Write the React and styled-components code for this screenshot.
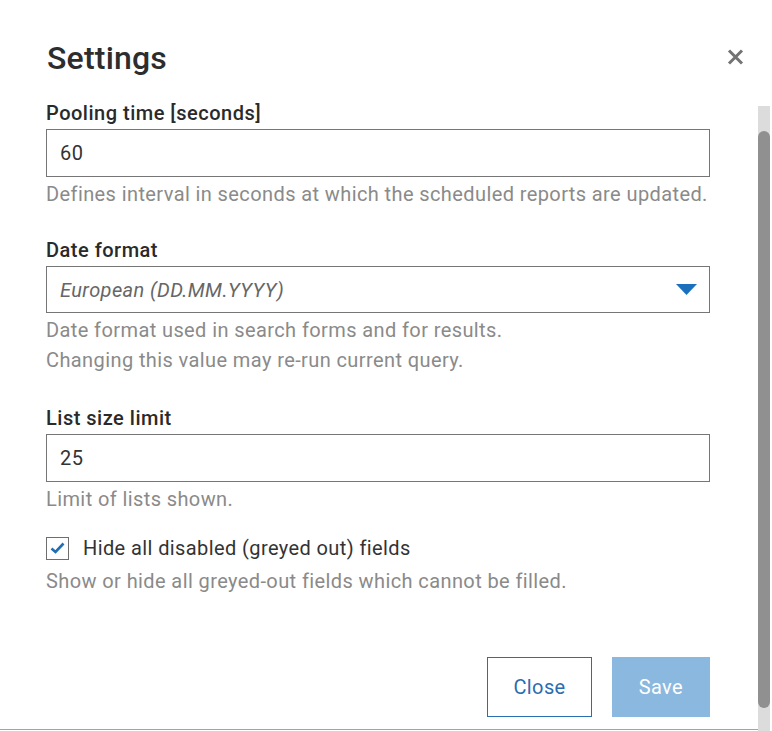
import React, { useState } from 'react';
import styled, { createGlobalStyle } from 'styled-components';

const GlobalStyle = createGlobalStyle`
  html, body {
    margin: 0;
    padding: 0;
    background: #ffffff;
  }
  body {
    font-family: Roboto, "Liberation Sans", Arial, sans-serif;
    -webkit-font-smoothing: antialiased;
  }
  * {
    box-sizing: border-box;
  }
`;

const Page = styled.div`
  width: 772px;
  height: 731px;
  display: flex;
  flex-direction: column;
  overflow: hidden;
`;

const Header = styled.div`
  display: flex;
  align-items: flex-start;
  justify-content: space-between;
  padding: 39px 28px 0 47px;
  height: 77px;
  flex-shrink: 0;
`;

const Title = styled.h1`
  margin: 0;
  font-size: 32px;
  line-height: 38px;
  font-weight: 500;
  letter-spacing: 0.2px;
  color: #2d2d2d;
`;

const CloseIcon = styled.button`
  border: none;
  background: none;
  padding: 0;
  margin-top: 10px;
  width: 17px;
  height: 16px;
  cursor: pointer;
  display: flex;
`;

const Main = styled.div`
  flex: 1;
  display: flex;
  min-height: 0;
`;

const Panel = styled.div`
  flex: 1;
  padding: 24px 0 0 46px;
  margin-bottom: 1px;
  border-bottom: 1px solid #a3a3a3;
  display: flex;
  flex-direction: column;
`;

const Content = styled.div`
  width: 664px;
  display: flex;
  flex-direction: column;
`;

const Field = styled.div`
  display: flex;
  flex-direction: column;
  margin-bottom: ${p => p.$gap ?? 30}px;
`;

const Label = styled.label`
  font-size: 20px;
  line-height: 24px;
  font-weight: 500;
  letter-spacing: 0.5px;
  color: #2a2a2a;
  margin-bottom: 4px;
`;

const Input = styled.input`
  height: 48px;
  width: 100%;
  border: 1px solid #767676;
  border-radius: 0;
  padding: 0 13px;
  font-family: inherit;
  font-size: 20px;
  letter-spacing: 0.4px;
  color: #333333;
  outline: none;
  background: #ffffff;
`;

const SelectBox = styled.div`
  height: 47px;
  border: 1px solid #767676;
  padding: 0 12px 0 13px;
  display: flex;
  align-items: center;
  justify-content: space-between;
  cursor: pointer;
`;

const SelectValue = styled.span`
  font-size: 20px;
  font-style: italic;
  letter-spacing: 0.4px;
  color: #666666;
`;

const Help = styled.div`
  font-size: 20px;
  line-height: 30px;
  letter-spacing: 0.4px;
  color: #8a8a8a;
  margin-top: ${p => p.$top ?? 2}px;
`;

const CheckRow = styled.label`
  display: flex;
  align-items: center;
  gap: 14px;
  cursor: pointer;
  font-size: 20px;
  line-height: 24px;
  letter-spacing: 0.4px;
  color: #333333;
`;

const CheckBox = styled.span`
  width: 23px;
  height: 23px;
  border: 1px solid #6e6e6e;
  display: flex;
  align-items: center;
  justify-content: center;
  background: #ffffff;
  flex-shrink: 0;
`;

const Footer = styled.div`
  display: flex;
  justify-content: flex-end;
  gap: 20px;
  margin-top: 61px;
`;

const Button = styled.button`
  height: 60px;
  padding: 0 ${p => (p.$primary ? 26 : 25)}px;
  font-family: inherit;
  font-size: 20px;
  letter-spacing: 0.4px;
  border-radius: 0;
  cursor: pointer;
  border: 1px solid ${p => (p.$primary ? '#8bb8de' : '#2a6db0')};
  background: ${p => (p.$primary ? '#8bb8de' : '#ffffff')};
  color: ${p => (p.$primary ? '#ffffff' : '#2a6db0')};
`;

const ScrollTrack = styled.div`
  width: 12px;
  margin: 29px 2px 0 0;
  padding-top: 25px;
  background: #dcdcdc;
  flex-shrink: 0;
`;

const ScrollThumb = styled.div`
  height: 577px;
  background: #909090;
  border-radius: 6px;
`;

const App = () => {
  const [pooling, setPooling] = useState('60');
  const [listSize, setListSize] = useState('25');
  const [hideDisabled, setHideDisabled] = useState(true);

  return (
    <>
      <GlobalStyle />
      <Page>
        <Header>
          <Title>Settings</Title>
          <CloseIcon aria-label="Close">
            <svg width="17" height="16" viewBox="0 0 17 16">
              <path d="M2 1.5 L15 14.5 M15 1.5 L2 14.5" stroke="#737373" strokeWidth="3" fill="none" />
            </svg>
          </CloseIcon>
        </Header>
        <Main>
          <Panel>
            <Content>
              <Field $gap={29}>
                <Label>Pooling time [seconds]</Label>
                <Input value={pooling} onChange={e => setPooling(e.target.value)} />
                <Help>Defines interval in seconds at which the scheduled reports are updated.</Help>
              </Field>

              <Field $gap={31}>
                <Label>Date format</Label>
                <SelectBox>
                  <SelectValue>European (DD.MM.YYYY)</SelectValue>
                  <svg width="21" height="11" viewBox="0 0 21 11">
                    <path d="M0 0 L21 0 L10.5 11 Z" fill="#1a70bd" />
                  </svg>
                </SelectBox>
                <Help>Date format used in search forms and for results.</Help>
                <Help $top={0}>Changing this value may re-run current query.</Help>
              </Field>

              <Field $gap={22}>
                <Label>List size limit</Label>
                <Input value={listSize} onChange={e => setListSize(e.target.value)} />
                <Help>Limit of lists shown.</Help>
              </Field>

              <Field $gap={0}>
                <CheckRow onClick={() => setHideDisabled(!hideDisabled)}>
                  <CheckBox>
                    {hideDisabled && (
                      <svg width="15" height="12" viewBox="0 0 15 12">
                        <path d="M1.5 6.5 L5.5 10 L13.5 1.5" stroke="#1f6fb2" strokeWidth="2.6" fill="none" />
                      </svg>
                    )}
                  </CheckBox>
                  Hide all disabled (greyed out) fields
                </CheckRow>
                <Help $top={6}>Show or hide all greyed-out fields which cannot be filled.</Help>
              </Field>

              <Footer>
                <Button>Close</Button>
                <Button $primary>Save</Button>
              </Footer>
            </Content>
          </Panel>
          <ScrollTrack>
            <ScrollThumb />
          </ScrollTrack>
        </Main>
      </Page>
    </>
  );
};

export default App;
